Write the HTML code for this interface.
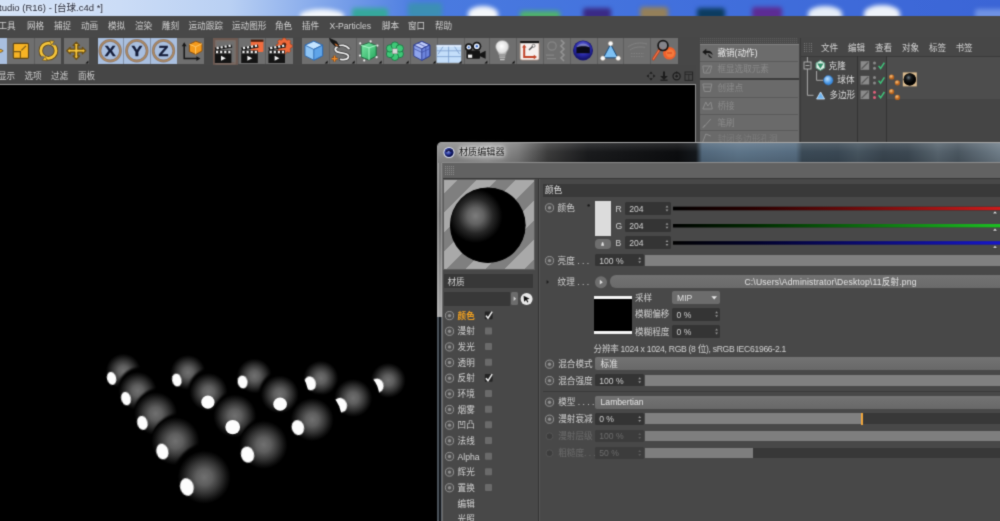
<!DOCTYPE html>
<html><head><meta charset="utf-8"><title>C4D</title><style>
html,body{margin:0;padding:0}
body{width:1000px;height:521px;overflow:hidden;position:relative;background:#000;
 font-family:"Liberation Sans","Noto Sans CJK SC",sans-serif;font-size:8.6px;line-height:10px;color:#d6d6d6;}
.a{position:absolute;display:block}
.t{position:absolute;white-space:nowrap;line-height:10px;height:10px}
svg{position:absolute;left:0;top:0;overflow:visible}
#w{position:absolute;left:0;top:0;width:1000px;height:521px;overflow:hidden;filter:url(#soft)}
</style></head><body><svg width="0" height="0" style="position:absolute"><defs><filter id="soft" x="0" y="0" width="100%" height="100%" color-interpolation-filters="sRGB"><feConvolveMatrix order="3" kernelMatrix="0.025 0.105 0.025 0.105 0.48 0.105 0.025 0.105 0.025" edgeMode="duplicate" preserveAlpha="true"/></filter></defs></svg><div id="w">
<div class="a" style="left:0px;top:0px;width:1000px;height:16.3px;background:linear-gradient(90deg,#d4e3f7 0px,#cbdcf6 120px,#b9d0f3 230px,#7ea4ea 330px,#4a7be0 420px,#416fdc 700px,#3b65d6 1000px);"></div>
<div class="a" style="left:0;top:0;width:1000px;height:16.3px;overflow:hidden">
<div class="a" style="left:300px;top:9px;width:44px;height:13px;background:#f2f6fb;border-radius:50% 50% 25% 25%;filter:blur(2px)"></div>
<div class="a" style="left:352px;top:8px;width:36px;height:13px;background:#36a79c;border-radius:3px;filter:blur(2px)"></div>
<div class="a" style="left:408px;top:3px;width:34px;height:15px;background:#3c8fb4;border-radius:3px;filter:blur(2px)"></div>
<div class="a" style="left:468px;top:6px;width:30px;height:15px;background:#f4f7fb;border-radius:50% 50% 25% 25%;filter:blur(2px)"></div>
<div class="a" style="left:520px;top:11px;width:40px;height:10px;background:#4fb26a;border-radius:3px;filter:blur(2px)"></div>
<div class="a" style="left:583px;top:8px;width:28px;height:12px;background:#3a2a86;border-radius:3px;filter:blur(2px)"></div>
<div class="a" style="left:640px;top:7px;width:28px;height:13px;background:#94805a;border-radius:3px;filter:blur(2px)"></div>
<div class="a" style="left:697px;top:8px;width:28px;height:12px;background:#0c3c60;border-radius:3px;filter:blur(2px)"></div>
<div class="a" style="left:752px;top:7px;width:30px;height:13px;background:#5c2c94;border-radius:3px;filter:blur(2px)"></div>
<div class="a" style="left:808px;top:6px;width:34px;height:16px;background:#e6eef8;border-radius:50% 50% 25% 25%;filter:blur(2px)"></div>
<div class="a" style="left:864px;top:5px;width:36px;height:17px;background:#eef3fa;border-radius:50% 50% 25% 25%;filter:blur(2px)"></div>
<div class="a" style="left:975px;top:9px;width:30px;height:11px;background:#6f92e4;border-radius:3px;filter:blur(2px)"></div>
</div>
<div class="t" style="left:-1px;top:2.8px;color:#1c2030;font-size:9.5px;text-shadow:0 0 3px #fff">tudio (R16) - [台球.c4d *]</div>
<div class="a" style="left:0px;top:16.1px;width:1000px;height:22px;background:#484848;"></div>
<div class="t" style="left:-1.5px;top:20.5px;color:#d2d2d2;">工具</div>
<div class="t" style="left:27px;top:20.5px;color:#d2d2d2;">网格</div>
<div class="t" style="left:54px;top:20.5px;color:#d2d2d2;">捕捉</div>
<div class="t" style="left:81px;top:20.5px;color:#d2d2d2;">动画</div>
<div class="t" style="left:108px;top:20.5px;color:#d2d2d2;">模拟</div>
<div class="t" style="left:135px;top:20.5px;color:#d2d2d2;">渲染</div>
<div class="t" style="left:162px;top:20.5px;color:#d2d2d2;">雕刻</div>
<div class="t" style="left:188.5px;top:20.5px;color:#d2d2d2;">运动跟踪</div>
<div class="t" style="left:232px;top:20.5px;color:#d2d2d2;">运动图形</div>
<div class="t" style="left:275px;top:20.5px;color:#d2d2d2;">角色</div>
<div class="t" style="left:302px;top:20.5px;color:#d2d2d2;">插件</div>
<div class="t" style="left:329.5px;top:20.5px;color:#d2d2d2;">X-Particles</div>
<div class="t" style="left:382px;top:20.5px;color:#d2d2d2;">脚本</div>
<div class="t" style="left:408px;top:20.5px;color:#d2d2d2;">窗口</div>
<div class="t" style="left:435px;top:20.5px;color:#d2d2d2;">帮助</div>
<div class="a" style="left:0px;top:37px;width:1000px;height:28px;background:#474747;"></div>
<div class="a" style="left:0px;top:38px;width:7px;height:26px;background:#a9bfdf;"></div>
<div class="a" style="left:7px;top:38px;width:53.5px;height:26px;background:#6f6f6f;"></div>
<div class="a" style="left:64px;top:38px;width:25px;height:26px;background:#6f6f6f;"></div>
<div class="a" style="left:98px;top:38px;width:79px;height:26px;background:#a9bfdf;"></div>
<div class="a" style="left:177px;top:38px;width:27px;height:26px;background:#6f6f6f;"></div>
<div class="a" style="left:213px;top:38px;width:79.5px;height:26px;background:#6f6f6f;"></div>
<div class="a" style="left:302px;top:38px;width:375.5px;height:26px;background:#6f6f6f;"></div>
<div class="a" style="left:33.8px;top:38px;width:0.8px;height:26px;background:rgba(60,60,60,.35);"></div>
<div class="a" style="left:123.3px;top:38px;width:0.8px;height:26px;background:rgba(60,60,60,.35);"></div>
<div class="a" style="left:150px;top:38px;width:0.8px;height:26px;background:rgba(60,60,60,.35);"></div>
<div class="a" style="left:238px;top:38px;width:0.8px;height:26px;background:rgba(60,60,60,.35);"></div>
<div class="a" style="left:264.5px;top:38px;width:0.8px;height:26px;background:rgba(60,60,60,.35);"></div>
<div class="a" style="left:329px;top:38px;width:0.8px;height:26px;background:rgba(60,60,60,.35);"></div>
<div class="a" style="left:356px;top:38px;width:0.8px;height:26px;background:rgba(60,60,60,.35);"></div>
<div class="a" style="left:383px;top:38px;width:0.8px;height:26px;background:rgba(60,60,60,.35);"></div>
<div class="a" style="left:410px;top:38px;width:0.8px;height:26px;background:rgba(60,60,60,.35);"></div>
<div class="a" style="left:437px;top:38px;width:0.8px;height:26px;background:rgba(60,60,60,.35);"></div>
<div class="a" style="left:464px;top:38px;width:0.8px;height:26px;background:rgba(60,60,60,.35);"></div>
<div class="a" style="left:488.8px;top:38px;width:0.8px;height:26px;background:rgba(60,60,60,.35);"></div>
<div class="a" style="left:516px;top:38px;width:0.8px;height:26px;background:rgba(60,60,60,.35);"></div>
<div class="a" style="left:543px;top:38px;width:0.8px;height:26px;background:rgba(60,60,60,.35);"></div>
<div class="a" style="left:570px;top:38px;width:0.8px;height:26px;background:rgba(60,60,60,.35);"></div>
<div class="a" style="left:597px;top:38px;width:0.8px;height:26px;background:rgba(60,60,60,.35);"></div>
<div class="a" style="left:623px;top:38px;width:0.8px;height:26px;background:rgba(60,60,60,.35);"></div>
<div class="a" style="left:650px;top:38px;width:0.8px;height:26px;background:rgba(60,60,60,.35);"></div>
<div class="a" style="left:0px;top:65px;width:696px;height:19px;background:#464646;"></div>
<div class="t" style="left:-2px;top:71px;color:#cfcfcf;">显示</div>
<div class="t" style="left:24.5px;top:71px;color:#cfcfcf;">选项</div>
<div class="t" style="left:51px;top:71px;color:#cfcfcf;">过滤</div>
<div class="t" style="left:78px;top:71px;color:#cfcfcf;">面板</div>
<div class="a" style="left:0px;top:84px;width:696px;height:1px;background:#9a9a9a;"></div>
<div class="a" style="left:695px;top:84px;width:1px;height:58px;background:#8e8e8e;"></div>
<div class="a" style="left:0px;top:85px;width:695px;height:436px;background:#000;"></div>
<div class="a" style="left:696px;top:65px;width:304px;height:77px;background:#474747;"></div>
<svg width="1000" height="521" viewBox="0 0 1000 521"><defs><linearGradient id="cubT" x1="0" y1="0" x2="0" y2="1"><stop offset="0" stop-color="#bfe3ff"/><stop offset="1" stop-color="#8fc6f7"/></linearGradient><radialGradient id="bsph" cx=".5" cy=".35" r=".7"><stop offset="0" stop-color="#8a8ef0"/><stop offset=".55" stop-color="#2a2aa8"/><stop offset="1" stop-color="#0c0c58"/></radialGradient><radialGradient id="bulb" cx=".45" cy=".4" r=".6"><stop offset="0" stop-color="#ffffff"/><stop offset=".7" stop-color="#e0e0e0"/><stop offset="1" stop-color="#a8a8a8"/></radialGradient><linearGradient id="gcube" x1="0" y1="0" x2="1" y2="1"><stop offset="0" stop-color="#7fe8a8"/><stop offset="1" stop-color="#24a85c"/></linearGradient></defs><path d="M-1 49.4 h2 l2.2 1.4 l-2.2 1.4 h-2z" fill="#f6b52a" stroke="#5a3c10" stroke-width=".7"/><rect x="13.3" y="43.4" width="15.2" height="15" rx="1.2" fill="#f6b324" stroke="#5a4316" stroke-width="1.1"/><path d="M13.6 51.6 h6.8 v6.6 M21.4 50.4 l4.6 -4.6" fill="none" stroke="#7a5a18" stroke-width="1.2"/><g fill="none"><circle cx="48.400" cy="50.700" r="7.600" stroke="#5a4316" stroke-width="4.400"/><circle cx="48.400" cy="50.700" r="7.600" stroke="#f4c43a" stroke-width="2.800"/><path d="M51.500 41.500 l3.400 3.400 M45.300 59.900 l-3.400 -3.400" stroke="#6f6f6f" stroke-width="2.600"/></g><path d="M49.600 40.600 l4.800 .6 l-2.800 3.800z M47.200 60.800 l-4.800 -.6 l2.800 -3.800z" fill="#f4c43a" stroke="#5a4316" stroke-width=".6"/><g stroke-linejoin="round"><path d="M76.3 42.2 l3.2 3.2 h-1.7 v3.8 h4.6 v-1.7 l3.4 3.2 l-3.4 3.2 v-1.7 h-4.600 v3.800 h1.700 l-3.200 3.200 l-3.200 -3.200 h1.700 v-3.800 h-4.600 v1.700 l-3.400 -3.200 l3.400 -3.200 v1.700 h4.600 v-3.800 h-1.700z" fill="#f8c63a" stroke="#6a4e14" stroke-width="1.3"/></g><path d="M88.4 60.4 v3 h-3z" fill="#111"/><circle cx="110.2" cy="50.7" r="10.3" fill="none" stroke="#8c7a70" stroke-width="2.8"/><circle cx="110.2" cy="50.7" r="10.3" fill="none" stroke="#b48c5c" stroke-width="1.2" opacity=".85"/><text transform="translate(110.2 55.8) scale(1.16 1)" text-anchor="middle" font-family="Liberation Sans, sans-serif" font-weight="bold" font-size="14" fill="#141c38" stroke="#141c38" stroke-width=".4">X</text><circle cx="136.8" cy="50.7" r="10.3" fill="none" stroke="#8c7a70" stroke-width="2.8"/><circle cx="136.8" cy="50.7" r="10.3" fill="none" stroke="#b48c5c" stroke-width="1.2" opacity=".85"/><text transform="translate(136.8 55.8) scale(1.16 1)" text-anchor="middle" font-family="Liberation Sans, sans-serif" font-weight="bold" font-size="14" fill="#141c38" stroke="#141c38" stroke-width=".4">Y</text><circle cx="163.5" cy="50.7" r="10.3" fill="none" stroke="#8c7a70" stroke-width="2.8"/><circle cx="163.5" cy="50.7" r="10.3" fill="none" stroke="#b48c5c" stroke-width="1.2" opacity=".85"/><text transform="translate(163.5 55.8) scale(1.16 1)" text-anchor="middle" font-family="Liberation Sans, sans-serif" font-weight="bold" font-size="14" fill="#141c38" stroke="#141c38" stroke-width=".4">Z</text><path d="M184.2 45.5 V58.6 H197" fill="none" stroke="#161616" stroke-width="1.5"/><path d="M181.8 46.2 l2.4 -4 l2.4 4z M196.4 56.2 l4 2.4 l-4 2.4z" fill="#161616"/><path d="M189.400 44.200 l6.400 -3 l6.200 2.400 v7.400 l-6.200 3.400 l-6.400 -2.800z" fill="#f49a1c" stroke="#8a4c0a" stroke-width=".9"/><path d="M189.400 44.200 l6.200 2.600 l6.400 -3.200 M195.600 46.800 v7.400" fill="none" stroke="#ffd27a" stroke-width=".8"/><rect x="214.200" y="39.200" width="22.600" height="24.400" fill="none" stroke="#6e5a52" stroke-width="2.400"/><rect x="216" y="40.800" width="19" height="23" fill="none" stroke="#7c6e68" stroke-width="1.200"/><rect x="214.8" y="53.8" width="16.6" height="9.2" fill="#141414"/><path d="M221 55.8 l4.8 2.5 l-4.8 2.500z" fill="#f2f2f2"/><rect x="214.8" y="50.4" width="16.6" height="3.2" fill="#111"/><path d="M214.8 47.6 l16.6 -3 l.8 3 l-16.6 3z" fill="#111"/><rect x="216" y="50.8" width="2.200" height="2.400" fill="#f4f4f4"/><rect x="216.4" y="47.1" width="2.200" height="2.200" fill="#f4f4f4" transform="rotate(-10 216.4 47.2)"/><rect x="220.1" y="50.8" width="2.200" height="2.400" fill="#f4f4f4"/><rect x="220.5" y="46.38" width="2.200" height="2.200" fill="#f4f4f4" transform="rotate(-10 220.5 47.2)"/><rect x="224.2" y="50.8" width="2.200" height="2.400" fill="#f4f4f4"/><rect x="224.6" y="45.66" width="2.200" height="2.200" fill="#f4f4f4" transform="rotate(-10 224.6 47.2)"/><rect x="228.3" y="50.8" width="2.200" height="2.400" fill="#f4f4f4"/><rect x="228.7" y="44.94" width="2.200" height="2.200" fill="#f4f4f4" transform="rotate(-10 228.7 47.2)"/><rect x="250.8" y="40" width="12.6" height="12" rx="1" fill="#f26c3e"/><rect x="250.8" y="39.6" width="12.6" height="2.2" fill="#4a1c0c"/><rect x="254.6" y="45.4" width="2.6" height="1.6" fill="#a03414"/><rect x="241.2" y="53.8" width="16.6" height="9.2" fill="#141414"/><path d="M247.4 55.8 l4.8 2.5 l-4.8 2.500z" fill="#f2f2f2"/><rect x="241.2" y="50.4" width="16.6" height="3.2" fill="#111"/><path d="M241.2 47.6 l16.6 -3 l.8 3 l-16.6 3z" fill="#111"/><rect x="242.4" y="50.8" width="2.200" height="2.400" fill="#f4f4f4"/><rect x="242.8" y="47.1" width="2.200" height="2.200" fill="#f4f4f4" transform="rotate(-10 242.8 47.2)"/><rect x="246.5" y="50.8" width="2.200" height="2.400" fill="#f4f4f4"/><rect x="246.9" y="46.38" width="2.200" height="2.200" fill="#f4f4f4" transform="rotate(-10 246.9 47.2)"/><rect x="250.6" y="50.8" width="2.200" height="2.400" fill="#f4f4f4"/><rect x="251" y="45.66" width="2.200" height="2.200" fill="#f4f4f4" transform="rotate(-10 251 47.2)"/><rect x="254.7" y="50.8" width="2.200" height="2.400" fill="#f4f4f4"/><rect x="255.1" y="44.94" width="2.200" height="2.200" fill="#f4f4f4" transform="rotate(-10 255.1 47.2)"/><path d="M247 62.4 l2.4 0 l0 -2.4z" fill="#111"/><g transform="translate(284.2 44.6)"><path d="M-1.3 -6.6 h2.6 l.5 1.6 l1.5 .7 l1.5 -.8 l1.8 1.8 l-.8 1.5 l.7 1.5 l1.6 .5 v2.6 l-1.6 .5 l-.7 1.5 l.8 1.5 l-1.8 1.8 l-1.5 -.8 l-1.5 .7 l-.5 1.6 h-2.6 l-.5 -1.6 l-1.5 -.7 l-1.5 .8 l-1.8 -1.8 l.8 -1.5 l-.7 -1.5 l-1.6 -.5 v-2.6 l1.6 -.5 l.7 -1.5 l-.8 -1.5 l1.8 -1.8 l1.5 .8 l1.5 -.7z" fill="#f0693a" stroke="#8a3414" stroke-width=".5"/><circle r="2.1" fill="#5c2410"/></g><rect x="268.4" y="53.8" width="16.6" height="9.2" fill="#141414"/><path d="M274.6 55.8 l4.8 2.5 l-4.8 2.500z" fill="#f2f2f2"/><rect x="268.4" y="50.4" width="16.6" height="3.2" fill="#111"/><path d="M268.4 47.6 l16.6 -3 l.8 3 l-16.6 3z" fill="#111"/><rect x="269.6" y="50.8" width="2.200" height="2.400" fill="#f4f4f4"/><rect x="270" y="47.1" width="2.200" height="2.200" fill="#f4f4f4" transform="rotate(-10 270 47.2)"/><rect x="273.7" y="50.8" width="2.200" height="2.400" fill="#f4f4f4"/><rect x="274.1" y="46.38" width="2.200" height="2.200" fill="#f4f4f4" transform="rotate(-10 274.1 47.2)"/><rect x="277.8" y="50.8" width="2.200" height="2.400" fill="#f4f4f4"/><rect x="278.2" y="45.66" width="2.200" height="2.200" fill="#f4f4f4" transform="rotate(-10 278.2 47.2)"/><rect x="281.9" y="50.8" width="2.200" height="2.400" fill="#f4f4f4"/><rect x="282.3" y="44.94" width="2.200" height="2.200" fill="#f4f4f4" transform="rotate(-10 282.3 47.2)"/><g stroke="#2a68b0" stroke-width=".9" stroke-linejoin="round"><path d="M313.8 41.2 l8.8 4 v10.6 l-8.8 4.4 l-8.8 -4.4 v-10.6z" fill="#8ec4f4"/><path d="M313.8 41.2 l8.8 4 l-8.8 4.2 l-8.8 -4.2z" fill="#c4e4ff"/><path d="M313.8 49.4 v10.8 l8.8 -4.4 v-10.6z" fill="#5fa4e8"/></g><path d="M327.6 60.4 v3 h-3z" fill="#111"/><path d="M349 48.600 C346 45 341 44.400 337.600 46.400 C333.600 48.800 335 52 340 52.600 C345 53.200 349 54.400 348.400 57 C347.600 59.600 343.600 59.800 340.600 59.400" fill="none" stroke="#3a3a3a" stroke-width="3.200" stroke-linecap="round"/><path d="M349 48.600 C346 45 341 44.400 337.600 46.400 C333.600 48.800 335 52 340 52.600 C345 53.200 349 54.400 348.400 57 C347.600 59.600 343.600 59.800 340.600 59.400" fill="none" stroke="#f2f2f2" stroke-width="1.700" stroke-linecap="round"/><path d="M329.600 38.400 l6.800 3.200 l3.200 5.400 l-5.200 -1.600 l-3.400 -3.600z" fill="#141414" stroke="#141414" stroke-width=".8" stroke-linejoin="round"/><path d="M334.4 43.2 l2.6 1 l1.6 2.2 l-3 -.9z" fill="#c86a2a"/><path d="M334.600 55.800 v5.800 M331.700 58.700 h5.800" stroke="#6a3a10" stroke-width="2.600"/><path d="M334.600 55.800 v5.800 M331.700 58.700 h5.800" stroke="#f08a28" stroke-width="1.500"/><path d="M354.6 60.4 v3 h-3z" fill="#111"/><g stroke="#1a6a3c" stroke-width=".9" stroke-linejoin="round"><path d="M361.200 45.400 l7.800 -2.800 l7.200 2.800 v10.600 l-7.200 4 l-7.800 -3z" fill="url(#gcube)"/><path d="M361.200 45.400 l7.800 2.400 l7.200 -2.400 M369 47.800 v12.200" fill="none" stroke="#b8ffd4" stroke-width=".8"/></g><circle cx="360.2" cy="43.4" r="1.1" fill="#ececec"/><circle cx="370.6" cy="41.4" r="1.1" fill="#ececec"/><circle cx="377.4" cy="45.6" r="1.1" fill="#ececec"/><circle cx="376.6" cy="57.2" r="1.1" fill="#ececec"/><circle cx="364.2" cy="60.4" r="1.1" fill="#ececec"/><circle cx="360" cy="55.6" r="1.1" fill="#ececec"/><path d="M381.6 60.4 v3 h-3z" fill="#111"/><circle cx="399.75" cy="54" r="3.7" fill="#3fc878" stroke="#14703c" stroke-width=".8"/><circle cx="394.9" cy="56.8" r="3.7" fill="#3fc878" stroke="#14703c" stroke-width=".8"/><circle cx="390.05" cy="54" r="3.7" fill="#3fc878" stroke="#14703c" stroke-width=".8"/><circle cx="390.05" cy="48.4" r="3.7" fill="#3fc878" stroke="#14703c" stroke-width=".8"/><circle cx="394.9" cy="45.6" r="3.7" fill="#3fc878" stroke="#14703c" stroke-width=".8"/><circle cx="399.75" cy="48.4" r="3.7" fill="#3fc878" stroke="#14703c" stroke-width=".8"/><rect x="392.4" y="48.8" width="5" height="5" fill="#d8d8d8" stroke="#8a8a8a" stroke-width=".5"/><path d="M408.6 60.4 v3 h-3z" fill="#111"/><g stroke="#2a3a8c" stroke-width=".9" stroke-linejoin="round"><path d="M421.8 41.4 l8 3.6 v11 l-8 4.4 l-8 -4.4 v-11z" fill="#8ea4ec"/><path d="M421.8 41.4 l8 3.6 l-8 3.8 l-8 -3.8z" fill="#c0ccfa"/><path d="M421.8 48.8 v11.6 l8 -4.4 v-11z" fill="#6c84dc"/><path d="M413.8 48.6 l8 3.8 l8 -3.8 M417.8 43.2 l8 3.6 v11.4" fill="none" stroke="#3a4aa0" stroke-width=".7"/></g><path d="M435.6 60.4 v3 h-3z" fill="#111"/><rect x="436.6" y="45.2" width="24.6" height="17.6" fill="#c4defa"/><path d="M436.6 45.2 h24.6 M436.6 50.8 h24.6 M436.6 56.6 h24.6 M448.6 45.2 v17.6 M444 45.2 l-6 9 M453.6 45.2 l6 9" fill="none" stroke="#7a9ccc" stroke-width=".8"/><rect x="436.6" y="45.2" width="24.6" height="1.4" fill="#e8f2ff"/><path d="M461.6 60.4 v3 h-3z" fill="#111"/><rect x="466.4" y="50.4" width="13.6" height="8.4" rx="1" fill="#141414"/><path d="M480 53.4 l5.6 -2.6 v8 l-5.6 -2.6z" fill="#141414"/><circle cx="468.8" cy="47.2" r="3.9" fill="#141414"/><circle cx="468.8" cy="47.2" r="2.3" fill="#e8f0ff"/><circle cx="468.8" cy="47.2" r="1" fill="#3a6ac0"/><circle cx="476.8" cy="46.2" r="4.5" fill="#141414"/><circle cx="476.8" cy="46.2" r="2.8" fill="#e8f0ff"/><circle cx="476.8" cy="46.2" r="1.2" fill="#3a6ac0"/><rect x="468" y="54.6" width="4.2" height="3.2" fill="#f0f0f0"/><path d="M487.4 60.4 v3 h-3z" fill="#111"/><path d="M502.3 40.6 c-4.6 0 -6.6 3.4 -6.6 6.2 c0 3.2 2.6 4.6 3.2 8 h6.8 c.6 -3.4 3.2 -4.8 3.2 -8 c0 -2.8 -2 -6.200 -6.600 -6.200z" fill="url(#bulb)" stroke="#9a9a9a" stroke-width=".7"/><path d="M499.2 56 h6.200 M499.4 57.8 h5.800 M500 59.600 h4.600" stroke="#c4c4c4" stroke-width="1.1"/><path d="M514.6 60.4 v3 h-3z" fill="#111"/><rect x="520.2" y="41.4" width="18.8" height="18.6" rx="1.8" fill="#f6f0ee" stroke="#b89888" stroke-width=".7"/><rect x="520.2" y="41" width="18.8" height="2.2" fill="#141414"/><path d="M524.2 47 V57 H534.400" fill="none" stroke="#c0442a" stroke-width="2"/><path d="M522 47.6 l2.2 -3.2 l2.200 3.200z M533.8 54.8 l3.2 2.200 l-3.200 2.200z" fill="#c0442a"/><path d="M529 50 l3.600 -3.600" stroke="#555" stroke-width="1.4"/><circle cx="533.6" cy="45.800" r="1.500" fill="none" stroke="#555" stroke-width=".7"/><g fill="none" stroke="#858585" stroke-width="1.2"><circle cx="552" cy="46" r="4.200"/><path d="M546 55.200 h8 M547 58.600 h9"/><path d="M561 40 l3 3 l-3 3 l3 3 l-3 3 l3 3 l-3 3 l3 3" stroke="#929292" stroke-width="1.600"/></g><circle cx="583" cy="50.400" r="10" fill="#1a1a70"/><circle cx="583" cy="50.400" r="9.400" fill="url(#bsph)"/><path d="M576.400 47.200 c2 -3.600 11 -3.600 13.400 0 v6 h-13.400z" fill="#0a0a18"/><path d="M576.400 47.400 c2 -4.800 11.400 -4.800 13.400 0 c-3 -1.600 -10 -1.600 -13.400 0z" fill="#8a8ed8" opacity=".8"/><path d="M610.600 44.200 l7.200 13.600 h-14.400z" fill="#7cc0f4" stroke="#1c4c7c" stroke-width="1"/><circle cx="610.6" cy="43.6" r="2.300" fill="#fbfbfb" stroke="#b8a898" stroke-width=".4"/><circle cx="602.8" cy="58.2" r="2.300" fill="#fbfbfb" stroke="#b8a898" stroke-width=".4"/><circle cx="618.2" cy="58.2" r="2.300" fill="#fbfbfb" stroke="#b8a898" stroke-width=".4"/><g fill="none" stroke="#828282" stroke-width=".9"><path d="M628 47 c5 -4 12 -5 19 -3 M630 50 c4 -3 10 -3.600 15 -2.600"/><path d="M631 53.600 h13 M631 56.400 h13" stroke-dasharray="1.5 1"/></g><circle cx="669.400" cy="53.200" r="6.300" fill="#f0602c"/><circle cx="670.200" cy="53.400" r="4.200" fill="#f47a3c"/><path d="M667 53 h5" stroke="#d84c20" stroke-width="1.200"/><path d="M660 49 L653.400 59" stroke="#c0401c" stroke-width="2.800" stroke-linecap="round"/><path d="M660 49 L653.400 59" stroke="#f0784c" stroke-width="1.300" stroke-linecap="round"/><circle cx="663" cy="45.600" r="4.900" fill="rgba(150,150,160,.55)" stroke="#161616" stroke-width="1.700"/><g fill="#1c1c1c"><path d="M651 71.600 l1.800 2.200 h-3.600z M651 80.400 l1.800 -2.200 h-3.600z M646.600 76 l2.200 -1.800 v3.600z M655.400 76 l-2.200 -1.800 v3.600z"/><path d="M663 71.600 h2 v4.400 h2.800 l-3.800 4 l-3.800 -4 h2.800z"/><rect x="660.400" y="79.600" width="7.200" height="1.200"/></g><g fill="none" stroke="#1c1c1c"><circle cx="676.600" cy="76.200" r="3.600" stroke-width="1.200"/><circle cx="676.600" cy="76.200" r=".9" fill="#1c1c1c"/><path d="M676.600 71.600 v2" stroke-width="1.200"/><rect x="685" y="72" width="7.600" height="8.400" stroke-width="1" stroke="#262626"/><path d="M685 74.400 h7.600 M688.800 74.400 v6" stroke-width=".8" stroke="#262626"/></g></svg>
<svg width="1000" height="521" viewBox="0 0 1000 521"><defs><radialGradient id="gl"><stop offset="0" stop-color="#707070"/><stop offset=".3" stop-color="#5e5e5e"/><stop offset=".6" stop-color="#363636"/><stop offset=".85" stop-color="#121212"/><stop offset="1" stop-color="#000"/></radialGradient><filter id="bl" x="-30%" y="-30%" width="160%" height="160%"><feGaussianBlur stdDeviation=".45"/></filter><filter id="bs" x="-30%" y="-30%" width="160%" height="160%"><feGaussianBlur stdDeviation="1.0"/></filter>
<mask id="m1" maskUnits="userSpaceOnUse" x="0" y="0" width="1000" height="521"><rect width="1000" height="521" fill="#fff"/><circle cx="279.8" cy="393.6" r="28.2" fill="#000"/></mask>
<mask id="m2" maskUnits="userSpaceOnUse" x="0" y="0" width="1000" height="521"><rect width="1000" height="521" fill="#fff"/><circle cx="353.6" cy="395.8" r="25.6" fill="#000"/></mask>
<mask id="m3" maskUnits="userSpaceOnUse" x="0" y="0" width="1000" height="521"><rect width="1000" height="521" fill="#fff"/><circle cx="312.2" cy="417.4" r="29.2" fill="#000"/></mask>
</defs>
<circle cx="126.3" cy="370.9" r="22" fill="#000" filter="url(#bs)"/>
<circle cx="123.3" cy="371.1" r="17.5" fill="url(#gl)"/>
<circle cx="191" cy="372.2" r="22" fill="#000" filter="url(#bs)"/>
<circle cx="188" cy="372.4" r="17.5" fill="url(#gl)"/>
<circle cx="257.4" cy="375.8" r="22" fill="#000" filter="url(#bs)"/>
<circle cx="254.4" cy="376" r="17.5" fill="url(#gl)"/>
<circle cx="323.8" cy="378" r="22" fill="#000" filter="url(#bs)"/>
<circle cx="320.8" cy="378.2" r="17.5" fill="url(#gl)"/>
<circle cx="391.2" cy="380.2" r="22" fill="#000" filter="url(#bs)"/>
<circle cx="388.2" cy="380.4" r="17.5" fill="url(#gl)"/>
<circle cx="141.1" cy="390.9" r="24" fill="#000" filter="url(#bs)"/>
<circle cx="137.7" cy="390.9" r="19" fill="url(#gl)"/>
<circle cx="212" cy="392" r="24" fill="#000" filter="url(#bs)"/>
<circle cx="208.6" cy="392" r="19" fill="url(#gl)"/>
<circle cx="283.2" cy="394.4" r="24" fill="#000" filter="url(#bs)"/>
<circle cx="279.8" cy="394.4" r="19" fill="url(#gl)"/>
<circle cx="356.6" cy="398" r="24" fill="#000" filter="url(#bs)"/>
<circle cx="353.2" cy="398" r="19" fill="url(#gl)"/>
<circle cx="160.2" cy="415" r="27" fill="#000" filter="url(#bs)"/>
<circle cx="155.7" cy="413.7" r="21.5" fill="url(#gl)"/>
<circle cx="239.3" cy="417.3" r="27" fill="#000" filter="url(#bs)"/>
<circle cx="234.8" cy="416" r="21.5" fill="url(#gl)"/>
<circle cx="316.7" cy="420.9" r="27" fill="#000" filter="url(#bs)"/>
<circle cx="312.2" cy="419.6" r="21.5" fill="url(#gl)"/>
<circle cx="180.4" cy="443" r="29.5" fill="#000" filter="url(#bs)"/>
<circle cx="175.4" cy="441.2" r="24" fill="url(#gl)"/>
<circle cx="268.6" cy="446.6" r="29.5" fill="#000" filter="url(#bs)"/>
<circle cx="263.6" cy="444.8" r="24" fill="url(#gl)"/>
<circle cx="209.7" cy="479.5" r="37" fill="#000" filter="url(#bs)"/>
<circle cx="204.2" cy="477.2" r="26.5" fill="url(#gl)"/>
<g><ellipse cx="111.6" cy="378.3" rx="4.6" ry="6.6" fill="#fdfdfd" transform="rotate(-14 111.6 378.3)" filter="url(#bl)"/></g>
<g><ellipse cx="176.8" cy="380" rx="4.7" ry="6.6" fill="#fdfdfd" transform="rotate(-12 176.8 380)" filter="url(#bl)"/></g>
<g><ellipse cx="242.6" cy="381.9" rx="5" ry="6.5" fill="#fdfdfd" transform="rotate(-10 242.6 381.9)" filter="url(#bl)"/></g>
<g mask="url(#m1)"><ellipse cx="310.2" cy="383.4" rx="5.6" ry="7.2" fill="#fdfdfd" transform="rotate(-18 310.2 383.4)" filter="url(#bl)"/></g>
<g mask="url(#m2)"><ellipse cx="377" cy="385.6" rx="6.6" ry="7.2" fill="#fdfdfd" transform="rotate(-20 377 385.6)" filter="url(#bl)"/></g>
<g><ellipse cx="126" cy="398.6" rx="4.8" ry="6.8" fill="#fdfdfd" transform="rotate(-14 126 398.6)" filter="url(#bl)"/></g>
<g><ellipse cx="207.9" cy="402.2" rx="6.6" ry="6.6" fill="#fdfdfd" transform="rotate(0 207.9 402.2)" filter="url(#bl)"/></g>
<g><ellipse cx="280.1" cy="404.2" rx="6.8" ry="6.6" fill="#fdfdfd" transform="rotate(0 280.1 404.2)" filter="url(#bl)"/></g>
<g mask="url(#m3)"><ellipse cx="340.4" cy="405.2" rx="6.6" ry="7.4" fill="#fdfdfd" transform="rotate(-18 340.4 405.2)" filter="url(#bl)"/></g>
<g><ellipse cx="142.4" cy="422.9" rx="5.2" ry="7.2" fill="#fdfdfd" transform="rotate(-14 142.4 422.9)" filter="url(#bl)"/></g>
<g><ellipse cx="232.7" cy="427.1" rx="7.4" ry="7.2" fill="#fdfdfd" transform="rotate(0 232.7 427.1)" filter="url(#bl)"/></g>
<g><ellipse cx="297.9" cy="427.6" rx="6.2" ry="7.6" fill="#fdfdfd" transform="rotate(-14 297.9 427.6)" filter="url(#bl)"/></g>
<g><ellipse cx="162.4" cy="451.6" rx="6" ry="8" fill="#fdfdfd" transform="rotate(-14 162.4 451.6)" filter="url(#bl)"/></g>
<g><ellipse cx="247.5" cy="454.6" rx="6.6" ry="8.2" fill="#fdfdfd" transform="rotate(-14 247.5 454.6)" filter="url(#bl)"/></g>
<g><ellipse cx="186.9" cy="487" rx="6.8" ry="9" fill="#fdfdfd" transform="rotate(-14 186.9 487)" filter="url(#bl)"/></g>
</svg>
<div class="a" style="left:700px;top:38px;width:98px;height:6px;background:#4a4a4a;background-image:linear-gradient(180deg,transparent 1px,#4a4a4a 1px),linear-gradient(90deg,#5e5e5e 1px,transparent 1px);background-size:2px 2px;"></div>
<div class="a" style="left:699.5px;top:44px;width:99px;height:33.5px;background:#6c6c6c;"></div>
<div class="a" style="left:699.5px;top:77.5px;width:99px;height:2.5px;background:#3c3c3c;"></div>
<div class="a" style="left:699.5px;top:80px;width:99px;height:62px;background:#6a6a6a;"></div>
<div class="a" style="left:699.5px;top:43.5px;width:99px;height:0.8px;background:#828282;"></div>
<div class="a" style="left:700px;top:60.5px;width:98px;height:0.8px;background:rgba(60,60,60,.35);"></div>
<div class="a" style="left:700px;top:96.5px;width:98px;height:0.8px;background:rgba(60,60,60,.35);"></div>
<div class="a" style="left:700px;top:113.5px;width:98px;height:0.8px;background:rgba(60,60,60,.35);"></div>
<div class="a" style="left:700px;top:130px;width:98px;height:0.8px;background:rgba(60,60,60,.35);"></div>
<div class="t" style="left:717.4px;top:47.5px;color:#ececec;">撤销(动作)</div>
<div class="t" style="left:717.4px;top:64px;color:#8a8a8a;">框显选取元素</div>
<div class="t" style="left:717.4px;top:83px;color:#8a8a8a;">创建点</div>
<div class="t" style="left:717.4px;top:100.5px;color:#8a8a8a;">桥接</div>
<div class="t" style="left:717.4px;top:117.5px;color:#8a8a8a;">笔刷</div>
<div class="t" style="left:717.4px;top:133.5px;color:#7c7c7c;">封闭多边形孔洞</div>
<svg width="1000" height="521" viewBox="0 0 1000 521"><g transform="translate(-1.2 0)"><path d="M703.5 52 l4 -3.2 v2 c4 -.6 6 1.2 6.4 4.4 c-1.4 -2 -3.4 -2.6 -6.4 -2.2 v2.2z" fill="#161616"/><path d="M709 53.5 l4.4 4.2 l-1.2 .3 l-2.2 -1.2z" fill="#222"/><g fill="none" stroke="#8c8c8c" stroke-width="1"><path d="M704 66 h9 l-2 7 h-6z M707 72 l4 -6"/><path d="M704 84 h9 l-1.5 7.5 h-6z M705 87 h7"/><path d="M704 109 l3 -7 l2 4 l3 -4 l1.5 7z"/><path d="M705 127 l7 -8 M706 125 l-2 3"/><path d="M704 142 l3 -8 l5 2"/></g></g></svg>
<div class="a" style="left:800px;top:37.5px;width:1px;height:105px;background:#3a3a3a;"></div>
<div class="a" style="left:801px;top:38px;width:199px;height:18px;background:#474747;"></div>
<div class="a" style="left:801px;top:56px;width:199px;height:86px;background:#454545;"></div>
<div class="a" style="left:887px;top:56px;width:113px;height:42.5px;background:#4d4d4d;"></div>
<div class="a" style="left:801px;top:55.5px;width:199px;height:0.8px;background:#3a3a3a;"></div>
<div class="a" style="left:857.3px;top:56px;width:0.9px;height:86px;background:#333;"></div>
<div class="a" style="left:886.4px;top:56px;width:0.9px;height:86px;background:#333;"></div>
<div class="a" style="left:804px;top:42.5px;width:9px;height:9px;background:transparent;background-image:linear-gradient(180deg,transparent 1px,#474747 1px),linear-gradient(90deg,#858585 1px,transparent 1px);background-size:2.4px 2px;opacity:.9"></div>
<div class="t" style="left:821px;top:42.5px;color:#d4d4d4;">文件</div>
<div class="t" style="left:848px;top:42.5px;color:#d4d4d4;">编辑</div>
<div class="t" style="left:875px;top:42.5px;color:#d4d4d4;">查看</div>
<div class="t" style="left:902px;top:42.5px;color:#d4d4d4;">对象</div>
<div class="t" style="left:929px;top:42.5px;color:#d4d4d4;">标签</div>
<div class="t" style="left:955.5px;top:42.5px;color:#d4d4d4;">书签</div>
<div class="t" style="left:828.6px;top:60.7px;color:#dcdcdc;">克隆</div>
<div class="t" style="left:837.3px;top:75.3px;color:#dcdcdc;">球体</div>
<div class="t" style="left:829.4px;top:89.8px;color:#dcdcdc;">多边形</div>
<svg width="1000" height="521" viewBox="0 0 1000 521"><defs><radialGradient id="osph" cx=".4" cy=".35"><stop offset="0" stop-color="#bfe2ff"/><stop offset="1" stop-color="#3f8fe0"/></radialGradient><radialGradient id="otag" cx=".4" cy=".35"><stop offset="0" stop-color="#6a7780"/><stop offset=".45" stop-color="#15181a"/><stop offset="1" stop-color="#000"/></radialGradient><radialGradient id="oor" cx=".4" cy=".35"><stop offset="0" stop-color="#ffc27a"/><stop offset="1" stop-color="#b5601a"/></radialGradient></defs><g fill="none" stroke="#b4b4b4" stroke-width=".9"><path d="M807.4 57 V62 M807.4 69 V95.3 H813.5 M816.6 71 V80.3 H823"/><rect x="804" y="62" width="7" height="7" fill="#454545"/><path d="M805.5 65.5 h4"/></g><g><path d="M820.400 60.600 l4.300 2.500 v4.800 l-4.300 2.500 l-4.300 -2.500 v-4.800z" fill="#e4f0ea" stroke="#58a888" stroke-width=".9"/><path d="M817.200 63.600 h6.400 l-3.200 5.200z" fill="#2f8f68"/></g><circle cx="828.3" cy="80.3" r="4.7" fill="url(#osph)" stroke="#2f6fb8" stroke-width=".6"/><path d="M820.600 92 l4 7 h-8z" fill="#6fb4f0" stroke="#d8ecff" stroke-width=".8"/><rect x="860.6" y="61.2" width="8.6" height="8.6" fill="#8a8a8a"/><path d="M861.6 68.8 l6.6 -6.6" stroke="#5a5a5a" stroke-width="1.3"/><circle cx="874.5" cy="62.9" r="1.5" fill="#8a8a8a"/><circle cx="874.5" cy="68.3" r="1.5" fill="#8a8a8a"/><path d="M878.6 65.9 l2 2.6 l3.8 -5.8" fill="none" stroke="#3fc27a" stroke-width="1.5"/><rect x="860.6" y="75.9" width="8.6" height="8.6" fill="#8a8a8a"/><path d="M861.6 83.5 l6.6 -6.6" stroke="#5a5a5a" stroke-width="1.3"/><circle cx="874.5" cy="77.6" r="1.5" fill="#8a8a8a"/><circle cx="874.5" cy="83" r="1.5" fill="#8a8a8a"/><path d="M878.6 80.6 l2 2.6 l3.8 -5.8" fill="none" stroke="#3fc27a" stroke-width="1.5"/><rect x="860.6" y="90.5" width="8.6" height="8.6" fill="#8a8a8a"/><path d="M861.6 98.1 l6.6 -6.6" stroke="#5a5a5a" stroke-width="1.3"/><circle cx="874.5" cy="92.2" r="1.5" fill="#e0607a"/><circle cx="874.5" cy="97.6" r="1.5" fill="#e0607a"/><path d="M878.6 95.2 l2 2.6 l3.8 -5.8" fill="none" stroke="#3fc27a" stroke-width="1.5"/><path d="M892 77.2 L897.6 83.2" stroke="#6a4a2a" stroke-width=".8"/><circle cx="891.6" cy="77" r="2.6" fill="url(#oor)"/><circle cx="897.4" cy="82.8" r="2.6" fill="url(#oor)"/><path d="M892 91.8 L897.6 97.8" stroke="#6a4a2a" stroke-width=".8"/><circle cx="891.6" cy="91.6" r="2.6" fill="url(#oor)"/><circle cx="897.4" cy="97.4" r="2.6" fill="url(#oor)"/><rect x="902.8" y="72.4" width="14" height="14" fill="#d9ba8e"/><circle cx="909.8" cy="79.400" r="6.200" fill="#000"/><circle cx="909.8" cy="79.400" r="6" fill="url(#otag)"/></svg>
<div class="a" style="left:437px;top:142px;width:570px;height:390px;border-radius:5px 0 0 0;background:#6c6c6c;box-shadow:inset 0 1px 0 #a8a8a8"></div>
<div class="a" style="left:437px;top:146px;width:1.6px;height:171.3px;background:linear-gradient(180deg,#a0a0a0,#8c8c8c 40%,#b0b0b0);"></div>
<div class="a" style="left:438.6px;top:146px;width:2px;height:171.3px;background:linear-gradient(180deg,#808080,#6a6a6a 40%,#a6a6a6);"></div>
<div class="a" style="left:440.6px;top:160px;width:1.4px;height:157.3px;background:linear-gradient(180deg,#8c8c8c,#909090 40%,#b4b4b4);"></div>
<div class="a" style="left:437px;top:317.3px;width:1.6px;height:204px;background:#4a525a;"></div>
<div class="a" style="left:438.6px;top:317.3px;width:2px;height:204px;background:#12161a;"></div>
<div class="a" style="left:440.6px;top:317.3px;width:1.4px;height:204px;background:#5e646c;"></div>
<div class="a" style="left:438px;top:143px;width:562px;height:19.5px;border-radius:4px 0 0 0;background:linear-gradient(90deg,#8e8e8e 0px,#8a8a8a 20px,#9a9a9a 50px,#7c7c7c 80px,#3c3c3c 110px,#1a1b1d 150px,#0c0d0f 240px,#14181c 258px,#52687c 264px,#5d7488 300px,#566c80 358px,#3b4a56 364px,#3a4854 400px,#46545f 420px,#3a4650 445px,#3c4852 470px,#56636d 500px,#4a5660 520px,#6f7d88 562px)"></div>
<div class="a" style="left:438px;top:143px;width:562px;height:19.5px;background:linear-gradient(180deg,rgba(255,255,255,.12),rgba(255,255,255,0) 45%,rgba(0,0,0,.12));border-radius:4px 0 0 0"></div>
<svg width="1000" height="521" viewBox="0 0 1000 521"><defs><radialGradient id="ticon" cx=".4" cy=".4"><stop offset="0" stop-color="#8fa0e8"/><stop offset=".6" stop-color="#2a3aa0"/><stop offset="1" stop-color="#0a1050"/></radialGradient></defs><circle cx="449" cy="152.5" r="5.6" fill="#dfe4f2"/><circle cx="449" cy="152.5" r="4.6" fill="url(#ticon)"/><path d="M445.4 152 a3.6 3.6 0 0 1 6.8 -.6 l-2 .5 a1.6 1.6 0 0 0 -3 .4z" fill="#0a0a30" opacity=".8"/></svg>
<div class="t" style="left:459px;top:147.3px;color:#101010;font-size:9.1px;text-shadow:0 0 3px #fff,0 0 5px #eee,0 0 7px #ddd">材质编辑器</div>
<div class="a" style="left:442px;top:162.3px;width:558px;height:359px;background:#484848;"></div>
<div class="a" style="left:442px;top:162.3px;width:558px;height:1px;background:#8c8c8c;"></div>
<div class="a" style="left:442px;top:163.3px;width:1px;height:358px;background:#6c6c6c;"></div>
<div class="a" style="left:443px;top:163.3px;width:557px;height:14.7px;background:#626262;"></div>
<div class="a" style="left:443px;top:178px;width:557px;height:0.9px;background:#363636;"></div>
<div class="a" style="left:445px;top:166px;width:9px;height:9px;background:transparent;background-image:linear-gradient(180deg,transparent 1px,#646464 1px),linear-gradient(90deg,#8c8c8c 1px,transparent 1px);background-size:2px 2px;"></div>
<div class="a" style="left:537.6px;top:179px;width:1.2px;height:343px;background:#343434;"></div>
<div class="a" style="left:538.8px;top:179px;width:0.8px;height:343px;background:#555;"></div>
<div class="a" style="left:444px;top:179.6px;width:90.2px;height:89.8px;background:repeating-linear-gradient(135deg,#a9a9a9 -4.6px,#a9a9a9 9.2px,#7f7f7f 9.2px,#7f7f7f 23px);box-shadow:0 0 0 1px #5c5c5c"></div>
<svg width="1000" height="521" viewBox="0 0 1000 521"><defs><radialGradient id="psph" gradientUnits="userSpaceOnUse" cx="475.5" cy="216" r="27"><stop offset="0" stop-color="#7c7c7c"/><stop offset=".3" stop-color="#626262"/><stop offset=".65" stop-color="#262626"/><stop offset="1" stop-color="#000"/></radialGradient></defs><circle cx="487.8" cy="225.2" r="37.8" fill="#000"/><circle cx="487.8" cy="225.2" r="37.4" fill="url(#psph)"/></svg>
<div class="a" style="left:443.5px;top:274.2px;width:89px;height:14px;background:#383838;"></div>
<div class="t" style="left:447.5px;top:276.6px;color:#d0d0d0;">材质</div>
<div class="a" style="left:443.5px;top:291.6px;width:66.5px;height:14px;background:#383838;"></div>
<div class="a" style="left:511px;top:292.2px;width:7.4px;height:13px;background:#6c6c6c;border-radius:1.5px"></div>
<svg width="1000" height="521" viewBox="0 0 1000 521"><path d="M513.6 296.6 l2.6 2.2 l-2.6 2.2z" fill="#d0d0d0"/><circle cx="526.6" cy="299" r="6" fill="#e9e9e9"/><path d="M523.6 295.8 l6 3 l-2.6 .6 l1.4 2.6 l-1 .5 l-1.4 -2.6 l-1.9 1.8z" fill="#111"/></svg>
<div class="t" style="left:457.6px;top:310.8px;color:#f0a020;font-weight:bold;">颜色</div>
<div class="t" style="left:457.6px;top:326.45px;color:#d2d2d2;">漫射</div>
<div class="t" style="left:457.6px;top:342.1px;color:#d2d2d2;">发光</div>
<div class="t" style="left:457.6px;top:357.75px;color:#d2d2d2;">透明</div>
<div class="t" style="left:457.6px;top:373.4px;color:#d2d2d2;">反射</div>
<div class="t" style="left:457.6px;top:389.05px;color:#d2d2d2;">环境</div>
<div class="t" style="left:457.6px;top:404.7px;color:#d2d2d2;">烟雾</div>
<div class="t" style="left:457.6px;top:420.35px;color:#d2d2d2;">凹凸</div>
<div class="t" style="left:457.6px;top:436px;color:#d2d2d2;">法线</div>
<div class="t" style="left:457.6px;top:451.65px;color:#d2d2d2;">Alpha</div>
<div class="t" style="left:457.6px;top:467.3px;color:#d2d2d2;">辉光</div>
<div class="t" style="left:457.6px;top:482.95px;color:#d2d2d2;">置换</div>
<div class="t" style="left:457.6px;top:498.6px;color:#d2d2d2;">编辑</div>
<div class="t" style="left:457.6px;top:514.25px;color:#d2d2d2;">光照</div>
<svg width="1000" height="521" viewBox="0 0 1000 521"><circle cx="449.5" cy="315.6" r="4.1" fill="#4e4e4e" stroke="#9a9a9a" stroke-width=".9"/><circle cx="449.5" cy="315.6" r="1.7" fill="#8e8e8e"/><rect x="484.8" y="311.4" width="7.8" height="7.8" rx="1" fill="#242424"/><path d="M486 315.6 l2 2.6 l4.2 -6.6" fill="none" stroke="#f2f2f2" stroke-width="1.5"/><circle cx="449.5" cy="331.25" r="4.1" fill="#4e4e4e" stroke="#9a9a9a" stroke-width=".9"/><circle cx="449.5" cy="331.25" r="1.7" fill="#8e8e8e"/><rect x="485" y="327.45" width="7" height="7" rx="1" fill="#6a6a6a"/><circle cx="449.5" cy="346.9" r="4.1" fill="#4e4e4e" stroke="#9a9a9a" stroke-width=".9"/><circle cx="449.5" cy="346.9" r="1.7" fill="#8e8e8e"/><rect x="485" y="343.1" width="7" height="7" rx="1" fill="#6a6a6a"/><circle cx="449.5" cy="362.55" r="4.1" fill="#4e4e4e" stroke="#9a9a9a" stroke-width=".9"/><circle cx="449.5" cy="362.55" r="1.7" fill="#8e8e8e"/><rect x="485" y="358.75" width="7" height="7" rx="1" fill="#6a6a6a"/><circle cx="449.5" cy="378.2" r="4.1" fill="#4e4e4e" stroke="#9a9a9a" stroke-width=".9"/><circle cx="449.5" cy="378.2" r="1.7" fill="#8e8e8e"/><rect x="484.8" y="374" width="7.8" height="7.8" rx="1" fill="#242424"/><path d="M486 378.2 l2 2.6 l4.2 -6.6" fill="none" stroke="#f2f2f2" stroke-width="1.5"/><circle cx="449.5" cy="393.85" r="4.1" fill="#4e4e4e" stroke="#9a9a9a" stroke-width=".9"/><circle cx="449.5" cy="393.85" r="1.7" fill="#8e8e8e"/><rect x="485" y="390.05" width="7" height="7" rx="1" fill="#6a6a6a"/><circle cx="449.5" cy="409.5" r="4.1" fill="#4e4e4e" stroke="#9a9a9a" stroke-width=".9"/><circle cx="449.5" cy="409.5" r="1.7" fill="#8e8e8e"/><rect x="485" y="405.7" width="7" height="7" rx="1" fill="#6a6a6a"/><circle cx="449.5" cy="425.15" r="4.1" fill="#4e4e4e" stroke="#9a9a9a" stroke-width=".9"/><circle cx="449.5" cy="425.15" r="1.7" fill="#8e8e8e"/><rect x="485" y="421.35" width="7" height="7" rx="1" fill="#6a6a6a"/><circle cx="449.5" cy="440.8" r="4.1" fill="#4e4e4e" stroke="#9a9a9a" stroke-width=".9"/><circle cx="449.5" cy="440.8" r="1.7" fill="#8e8e8e"/><rect x="485" y="437" width="7" height="7" rx="1" fill="#6a6a6a"/><circle cx="449.5" cy="456.45" r="4.1" fill="#4e4e4e" stroke="#9a9a9a" stroke-width=".9"/><circle cx="449.5" cy="456.45" r="1.7" fill="#8e8e8e"/><rect x="485" y="452.65" width="7" height="7" rx="1" fill="#6a6a6a"/><circle cx="449.5" cy="472.1" r="4.1" fill="#4e4e4e" stroke="#9a9a9a" stroke-width=".9"/><circle cx="449.5" cy="472.1" r="1.7" fill="#8e8e8e"/><rect x="485" y="468.3" width="7" height="7" rx="1" fill="#6a6a6a"/><circle cx="449.5" cy="487.75" r="4.1" fill="#4e4e4e" stroke="#9a9a9a" stroke-width=".9"/><circle cx="449.5" cy="487.75" r="1.7" fill="#8e8e8e"/><rect x="485" y="483.95" width="7" height="7" rx="1" fill="#6a6a6a"/></svg>
<div class="a" style="left:542.5px;top:183.8px;width:458px;height:13px;background:#393939;"></div>
<div class="t" style="left:545px;top:185.3px;color:#e0e0e0;">颜色</div>
<div class="t" style="left:557.6px;top:203px;color:#d2d2d2;">颜色</div>
<div class="a" style="left:594.6px;top:201px;width:16.6px;height:35.2px;background:#dcdcdc;"></div>
<div class="a" style="left:595px;top:239px;width:16.4px;height:10px;background:#6e6e6e;border-radius:4px"></div>
<div class="t" style="left:615.4px;top:203.9px;color:#d2d2d2;">R</div>
<div class="a" style="left:625px;top:201.9px;width:45.8px;height:13.2px;background:#343434;border-radius:1.5px"></div>
<div class="t" style="left:629.2px;top:203.7px;color:#d0d0d0;">204</div>
<svg width="1000" height="521" viewBox="0 0 1000 521"><path d="M665.6 207.5 l1.4 -2 l1.4 2z M665.6 209.5 l1.4 2 l1.4 -2z" fill="#9a9a9a"/></svg>
<div class="a" style="left:672.5px;top:206.3px;width:328px;height:4.8px;background:#3c3c3c;"></div>
<div class="t" style="left:615.4px;top:221.1px;color:#d2d2d2;">G</div>
<div class="a" style="left:625px;top:219.1px;width:45.8px;height:13.2px;background:#343434;border-radius:1.5px"></div>
<div class="t" style="left:629.2px;top:220.9px;color:#d0d0d0;">204</div>
<svg width="1000" height="521" viewBox="0 0 1000 521"><path d="M665.6 224.7 l1.4 -2 l1.4 2z M665.6 226.7 l1.4 2 l1.4 -2z" fill="#9a9a9a"/></svg>
<div class="a" style="left:672.5px;top:223.5px;width:328px;height:4.8px;background:#3c3c3c;"></div>
<div class="t" style="left:615.4px;top:238.3px;color:#d2d2d2;">B</div>
<div class="a" style="left:625px;top:236.3px;width:45.8px;height:13.2px;background:#343434;border-radius:1.5px"></div>
<div class="t" style="left:629.2px;top:238.1px;color:#d0d0d0;">204</div>
<svg width="1000" height="521" viewBox="0 0 1000 521"><path d="M665.6 241.9 l1.4 -2 l1.4 2z M665.6 243.9 l1.4 2 l1.4 -2z" fill="#9a9a9a"/></svg>
<div class="a" style="left:672.5px;top:240.7px;width:328px;height:4.8px;background:#3c3c3c;"></div>
<div class="t" style="left:557.6px;top:255.8px;color:#d2d2d2;">亮度 . . .</div>
<div class="a" style="left:595px;top:254.2px;width:48.5px;height:12.2px;background:#343434;border-radius:1.5px"></div>
<div class="t" style="left:599.2px;top:255.5px;color:#d0d0d0;">100 %</div>
<svg width="1000" height="521" viewBox="0 0 1000 521"><path d="M638.3 259.3 l1.4 -2 l1.4 2z M638.3 261.3 l1.4 2 l1.4 -2z" fill="#9a9a9a"/></svg>
<div class="a" style="left:644.8px;top:255px;width:356px;height:10.5px;background:#808080;"></div>
<div class="t" style="left:557.6px;top:277.3px;color:#d2d2d2;">纹理 . . .</div>
<div class="a" style="left:610px;top:275px;width:391px;height:12.8px;background:linear-gradient(180deg,#727272,#6a6a6a);border-radius:6px 0 0 6px"></div>
<div class="t" style="left:744.4px;top:277.4px;color:#e4e4e4;letter-spacing:.17px">C:\Users\Administrator\Desktop\11反射.png</div>
<div class="a" style="left:593.6px;top:295.6px;width:38px;height:38.4px;background:#000;"></div>
<div class="a" style="left:593.6px;top:295.6px;width:38px;height:3px;background:#f4f4f4;"></div>
<div class="a" style="left:593.6px;top:331px;width:38px;height:3px;background:#f4f4f4;"></div>
<div class="t" style="left:635px;top:292.8px;color:#d2d2d2;">采样</div>
<div class="a" style="left:672.4px;top:291.2px;width:48px;height:13px;background:#6c6c6c;border-radius:2px"></div>
<div class="t" style="left:677px;top:292.9px;color:#e0e0e0;">MIP</div>
<div class="t" style="left:635px;top:309.2px;color:#d2d2d2;">模糊偏移</div>
<div class="a" style="left:672.4px;top:307.8px;width:48px;height:13px;background:#343434;border-radius:1.5px"></div>
<div class="t" style="left:676.6px;top:309.5px;color:#d0d0d0;">0 %</div>
<svg width="1000" height="521" viewBox="0 0 1000 521"><path d="M715.2 313.3 l1.4 -2 l1.4 2z M715.2 315.3 l1.4 2 l1.4 -2z" fill="#9a9a9a"/></svg>
<div class="t" style="left:635px;top:326.5px;color:#d2d2d2;">模糊程度</div>
<div class="a" style="left:672.4px;top:325px;width:48px;height:13px;background:#343434;border-radius:1.5px"></div>
<div class="t" style="left:676.6px;top:326.7px;color:#d0d0d0;">0 %</div>
<svg width="1000" height="521" viewBox="0 0 1000 521"><path d="M715.2 330.5 l1.4 -2 l1.4 2z M715.2 332.5 l1.4 2 l1.4 -2z" fill="#9a9a9a"/></svg>
<div class="t" style="left:593.6px;top:343.8px;color:#d2d2d2;letter-spacing:-.3px">分辨率 1024 x 1024, RGB (8 位), sRGB IEC61966-2.1</div>
<div class="t" style="left:558.2px;top:359.3px;color:#d2d2d2;">混合模式</div>
<div class="a" style="left:595px;top:357.4px;width:406px;height:12.6px;background:linear-gradient(180deg,#737373,#686868);border-radius:2px 0 0 2px"></div>
<div class="t" style="left:600.6px;top:359.4px;color:#e4e4e4;">标准</div>
<div class="t" style="left:558.2px;top:375.7px;color:#d2d2d2;">混合强度</div>
<div class="a" style="left:595px;top:374.2px;width:48.5px;height:12.2px;background:#343434;border-radius:1.5px"></div>
<div class="t" style="left:599.2px;top:375.5px;color:#d0d0d0;">100 %</div>
<svg width="1000" height="521" viewBox="0 0 1000 521"><path d="M638.3 379.3 l1.4 -2 l1.4 2z M638.3 381.3 l1.4 2 l1.4 -2z" fill="#9a9a9a"/></svg>
<div class="a" style="left:644.8px;top:375px;width:356px;height:10.8px;background:#808080;"></div>
<div class="a" style="left:542.5px;top:391.4px;width:458px;height:0.8px;background:#3a3a3a;"></div>
<div class="t" style="left:558.2px;top:397.3px;color:#d2d2d2;">模型 . . . .</div>
<div class="a" style="left:595px;top:395.6px;width:406px;height:13px;background:linear-gradient(180deg,#737373,#686868);border-radius:2px 0 0 2px"></div>
<div class="t" style="left:600.6px;top:397.2px;color:#e4e4e4;">Lambertian</div>
<div class="t" style="left:558.2px;top:414.3px;color:#d2d2d2;">漫射衰减</div>
<div class="a" style="left:595px;top:412.8px;width:48.5px;height:12.2px;background:#343434;border-radius:1.5px"></div>
<div class="t" style="left:599.2px;top:414.1px;color:#d0d0d0;">0 %</div>
<svg width="1000" height="521" viewBox="0 0 1000 521"><path d="M638.3 417.9 l1.4 -2 l1.4 2z M638.3 419.9 l1.4 2 l1.4 -2z" fill="#9a9a9a"/></svg>
<div class="a" style="left:644.8px;top:413.4px;width:356px;height:10.8px;background:#383838;"></div>
<div class="a" style="left:644.8px;top:413.4px;width:217px;height:10.8px;background:#808080;"></div>
<div class="a" style="left:861.4px;top:413px;width:1.8px;height:11.6px;background:#f0a63c;"></div>
<div class="t" style="left:558.2px;top:431.3px;color:#6c6c6c;">漫射层级</div>
<div class="a" style="left:595px;top:430px;width:48.5px;height:12.2px;background:#3c3c3c;border-radius:1.5px"></div>
<div class="t" style="left:599.2px;top:431.3px;color:#6c6c6c;">100 %</div>
<svg width="1000" height="521" viewBox="0 0 1000 521"><path d="M638.3 435.1 l1.4 -2 l1.4 2z M638.3 437.1 l1.4 2 l1.4 -2z" fill="#5c5c5c"/></svg>
<div class="a" style="left:644.8px;top:430.6px;width:356px;height:10.8px;background:#7e7e7e;"></div>
<div class="t" style="left:558.2px;top:448.3px;color:#6c6c6c;">粗糙度. . .</div>
<div class="a" style="left:595px;top:447px;width:48.5px;height:12.2px;background:#3c3c3c;border-radius:1.5px"></div>
<div class="t" style="left:599.2px;top:448.3px;color:#6c6c6c;">50 %</div>
<svg width="1000" height="521" viewBox="0 0 1000 521"><path d="M638.3 452.1 l1.4 -2 l1.4 2z M638.3 454.1 l1.4 2 l1.4 -2z" fill="#5c5c5c"/></svg>
<div class="a" style="left:644.8px;top:447.6px;width:356px;height:10.8px;background:#383838;"></div>
<div class="a" style="left:644.8px;top:447.6px;width:108px;height:10.8px;background:#7e7e7e;"></div>
<svg width="1000" height="521" viewBox="0 0 1000 521"><defs><linearGradient id="gr" x1="0" x2="1"><stop offset="0" stop-color="#000"/><stop offset=".25" stop-color="#2a0000"/><stop offset="1" stop-color="#cc1a1a"/></linearGradient><linearGradient id="gg" x1="0" x2="1"><stop offset="0" stop-color="#000"/><stop offset=".25" stop-color="#002a00"/><stop offset="1" stop-color="#1cbe22"/></linearGradient><linearGradient id="gb" x1="0" x2="1"><stop offset="0" stop-color="#000"/><stop offset=".25" stop-color="#00002a"/><stop offset="1" stop-color="#1616cc"/></linearGradient></defs><circle cx="549.5" cy="207.8" r="4.1" fill="#4e4e4e" stroke="#9a9a9a" stroke-width=".9"/><circle cx="549.5" cy="207.8" r="1.7" fill="#8e8e8e"/><circle cx="588.6" cy="205.4" r="1.2" fill="#161616"/><path d="M602 242.2 l1.2 0 l.9 3.6 h-3z" fill="#e6e6e6"/><rect x="673" y="206.8" width="327" height="3.4" fill="url(#gr)"/><path d="M992.6 213.7 l2.4 -2.6 l2.4 2.6z" fill="#f4f4f4" stroke="#222" stroke-width=".5"/><rect x="673" y="224" width="327" height="3.4" fill="url(#gg)"/><path d="M992.6 230.9 l2.4 -2.6 l2.4 2.6z" fill="#f4f4f4" stroke="#222" stroke-width=".5"/><rect x="673" y="241.2" width="327" height="3.4" fill="url(#gb)"/><path d="M992.6 248.1 l2.4 -2.6 l2.4 2.6z" fill="#f4f4f4" stroke="#222" stroke-width=".5"/><circle cx="549.5" cy="260.6" r="4.1" fill="#4e4e4e" stroke="#9a9a9a" stroke-width=".9"/><circle cx="549.5" cy="260.6" r="1.7" fill="#8e8e8e"/><path d="M546.6 280 l2.4 2 l-2.4 2z" fill="#1c1c1c"/><circle cx="601" cy="282.2" r="6" fill="#6e6e6e"/><path d="M599.8 279.8 l3 2.4 l-3 2.4z" fill="#e0e0e0"/><path d="M711.4 296.2 h5.6 l-2.8 3.2z" fill="#e6e6e6"/><circle cx="549.5" cy="364.2" r="4.1" fill="#4e4e4e" stroke="#9a9a9a" stroke-width=".9"/><circle cx="549.5" cy="364.2" r="1.7" fill="#8e8e8e"/><circle cx="549.5" cy="380.6" r="4.1" fill="#4e4e4e" stroke="#9a9a9a" stroke-width=".9"/><circle cx="549.5" cy="380.6" r="1.7" fill="#8e8e8e"/><circle cx="549.5" cy="402.2" r="4.1" fill="#4e4e4e" stroke="#9a9a9a" stroke-width=".9"/><circle cx="549.5" cy="402.2" r="1.7" fill="#8e8e8e"/><circle cx="549.5" cy="419.2" r="4.1" fill="#4e4e4e" stroke="#9a9a9a" stroke-width=".9"/><circle cx="549.5" cy="419.2" r="1.7" fill="#8e8e8e"/><circle cx="549.5" cy="436.2" r="3.4" fill="#3c3c3c" stroke="#5a5a5a" stroke-width=".8"/><circle cx="549.5" cy="453.2" r="3.4" fill="#3c3c3c" stroke="#5a5a5a" stroke-width=".8"/></svg>
</div></body></html>
